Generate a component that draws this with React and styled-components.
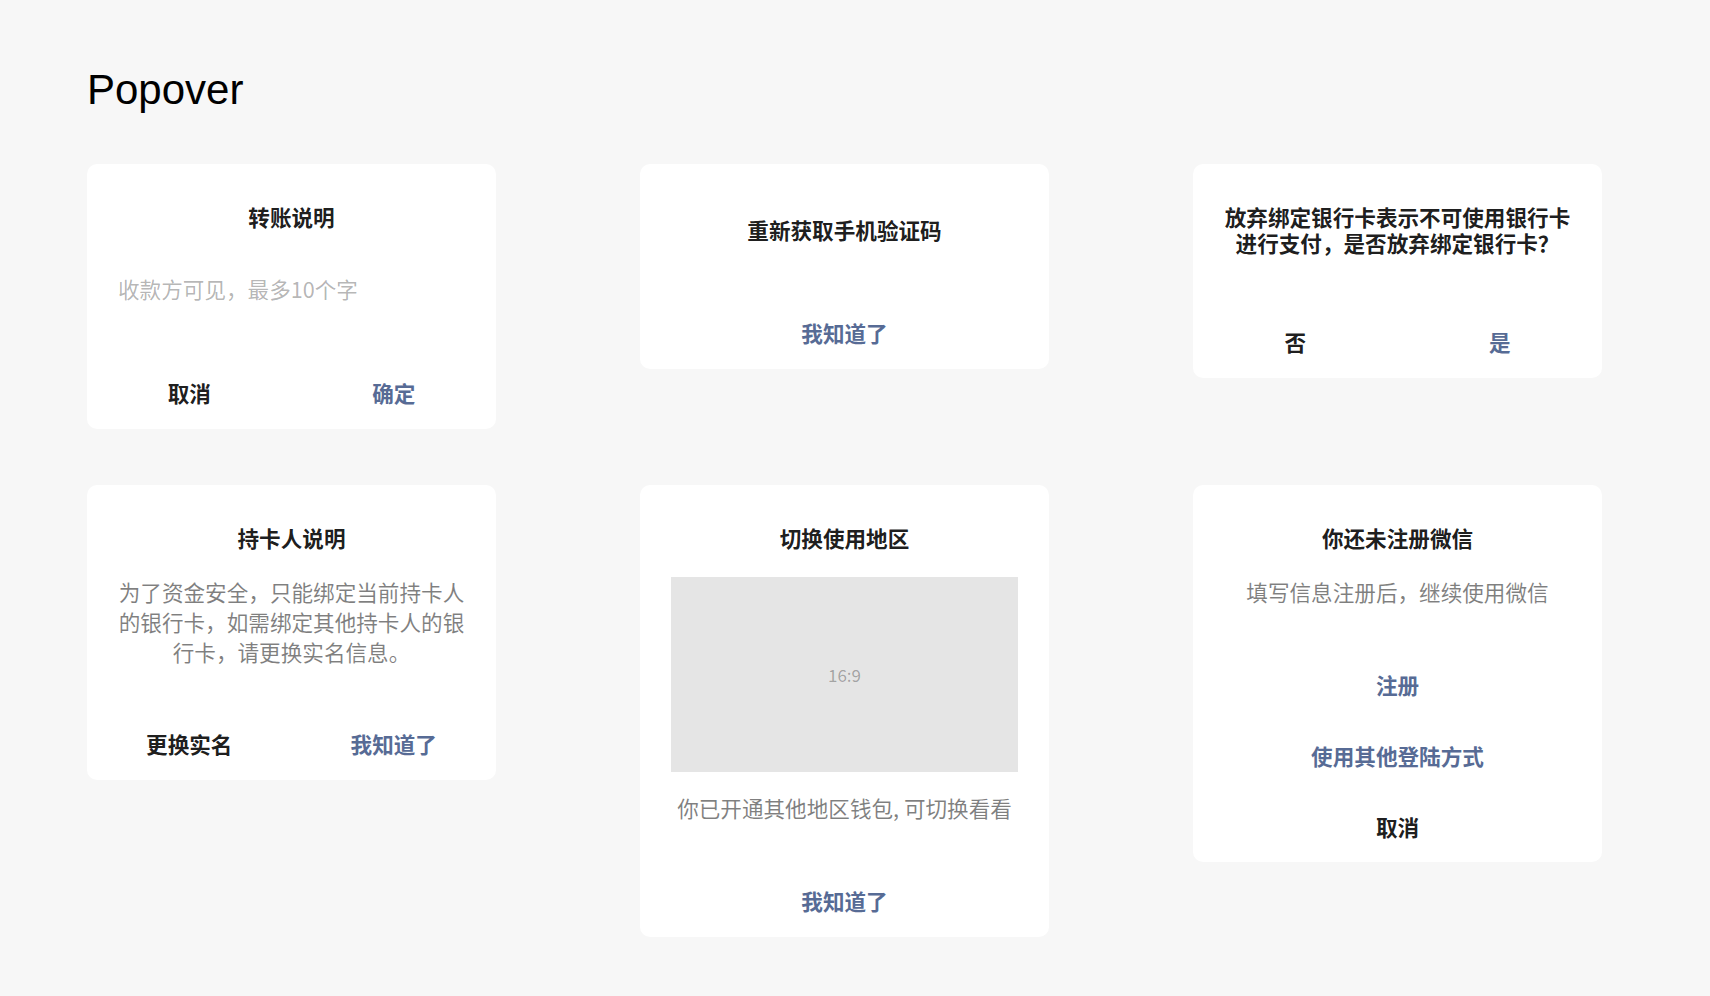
import React from 'react'
import styled, { createGlobalStyle } from 'styled-components'

const GlobalStyle = createGlobalStyle`
  body {
    margin: 0;
    background: #f7f7f7;
    font-family: "Noto Sans CJK SC", "Noto Sans", sans-serif;
  }
`

const Page = styled.main`
  padding: 66px 0 0 87px;
`

const PageTitle = styled.h1`
  margin: 0 0 50px;
  font-family: "Liberation Sans", Arial, sans-serif;
  font-size: 42px;
  font-weight: 400;
  line-height: 48px;
  color: #000;
`

const Grid = styled.div`
  display: grid;
  grid-template-columns: repeat(3, 409px);
  column-gap: 144px;
  row-gap: 56px;
  align-items: start;
`

const Card = styled.section`
  background: #fff;
  border-radius: 10px;
  padding-top: ${p => p.$top ?? 40}px;
  text-align: center;
  overflow: hidden;
`

const Title = styled.h2`
  margin: 0;
  padding: 0 24px;
  font-size: 21.6px;
  font-weight: 700;
  line-height: 26px;
  color: rgba(0, 0, 0, 0.9);
`

const Body = styled.p`
  margin: ${p => p.$gap ?? 26}px 0 0;
  padding: 0 30px;
  font-size: 21.6px;
  line-height: 30px;
  color: rgba(0, 0, 0, 0.5);
`

const Placeholder = styled.div`
  margin: 44px 0 53px;
  padding: 0 31px;
  text-align: left;
  font-size: 21.6px;
  line-height: 30px;
  color: rgba(0, 0, 0, 0.3);
`

const Media = styled.div`
  margin: 26px 31px 0;
  aspect-ratio: 16 / 9;
  background: #e5e5e5;
  display: flex;
  align-items: center;
  justify-content: center;
  font-size: 17px;
  color: rgba(0, 0, 0, 0.3);
`

const Footer = styled.div`
  margin-top: ${p => p.$gap ?? 42}px;
  display: flex;
  flex-direction: ${p => (p.$vertical ? 'column' : 'row')};

  & > button {
    flex: ${p => (p.$vertical ? 'none' : '1 1 0')};
    height: ${p => (p.$vertical ? 71 : 72)}px;
  }
`

const Action = styled.button`
  border: none;
  background: transparent;
  padding: 0 0 1px;
  font-family: inherit;
  font-size: 21.6px;
  font-weight: 700;
  color: ${p => (p.$primary ? '#576b95' : 'rgba(0, 0, 0, 0.9)')};
  cursor: pointer;
`

const App = () => (
  <Page>
    <GlobalStyle />
    <PageTitle>Popover</PageTitle>
    <Grid>
      <Card>
        <Title>转账说明</Title>
        <Placeholder>收款方可见，最多10个字</Placeholder>
        <Footer $gap={0}>
          <Action>取消</Action>
          <Action $primary>确定</Action>
        </Footer>
      </Card>

      <Card $top={53}>
        <Title>重新获取手机验证码</Title>
        <Footer $gap={54}>
          <Action $primary>我知道了</Action>
        </Footer>
      </Card>

      <Card>
        <Title>
          放弃绑定银行卡表示不可使用银行卡
          <br />
          进行支付，是否放弃绑定银行卡？
        </Title>
        <Footer $gap={50}>
          <Action>否</Action>
          <Action $primary>是</Action>
        </Footer>
      </Card>

      <Card>
        <Title>持卡人说明</Title>
        <Body>
          为了资金安全，只能绑定当前持卡人的银行卡，如需绑定其他持卡人的银行卡，请更换实名信息。
        </Body>
        <Footer $gap={41}>
          <Action>更换实名</Action>
          <Action $primary>我知道了</Action>
        </Footer>
      </Card>

      <Card>
        <Title>切换使用地区</Title>
        <Media>16:9</Media>
        <Body $gap={21}>你已开通其他地区钱包, 可切换看看</Body>
        <Footer>
          <Action $primary>我知道了</Action>
        </Footer>
      </Card>

      <Card>
        <Title>你还未注册微信</Title>
        <Body>填写信息注册后，继续使用微信</Body>
        <Footer $vertical>
          <Action $primary>注册</Action>
          <Action $primary>使用其他登陆方式</Action>
          <Action>取消</Action>
        </Footer>
      </Card>
    </Grid>
  </Page>
)

export default App
